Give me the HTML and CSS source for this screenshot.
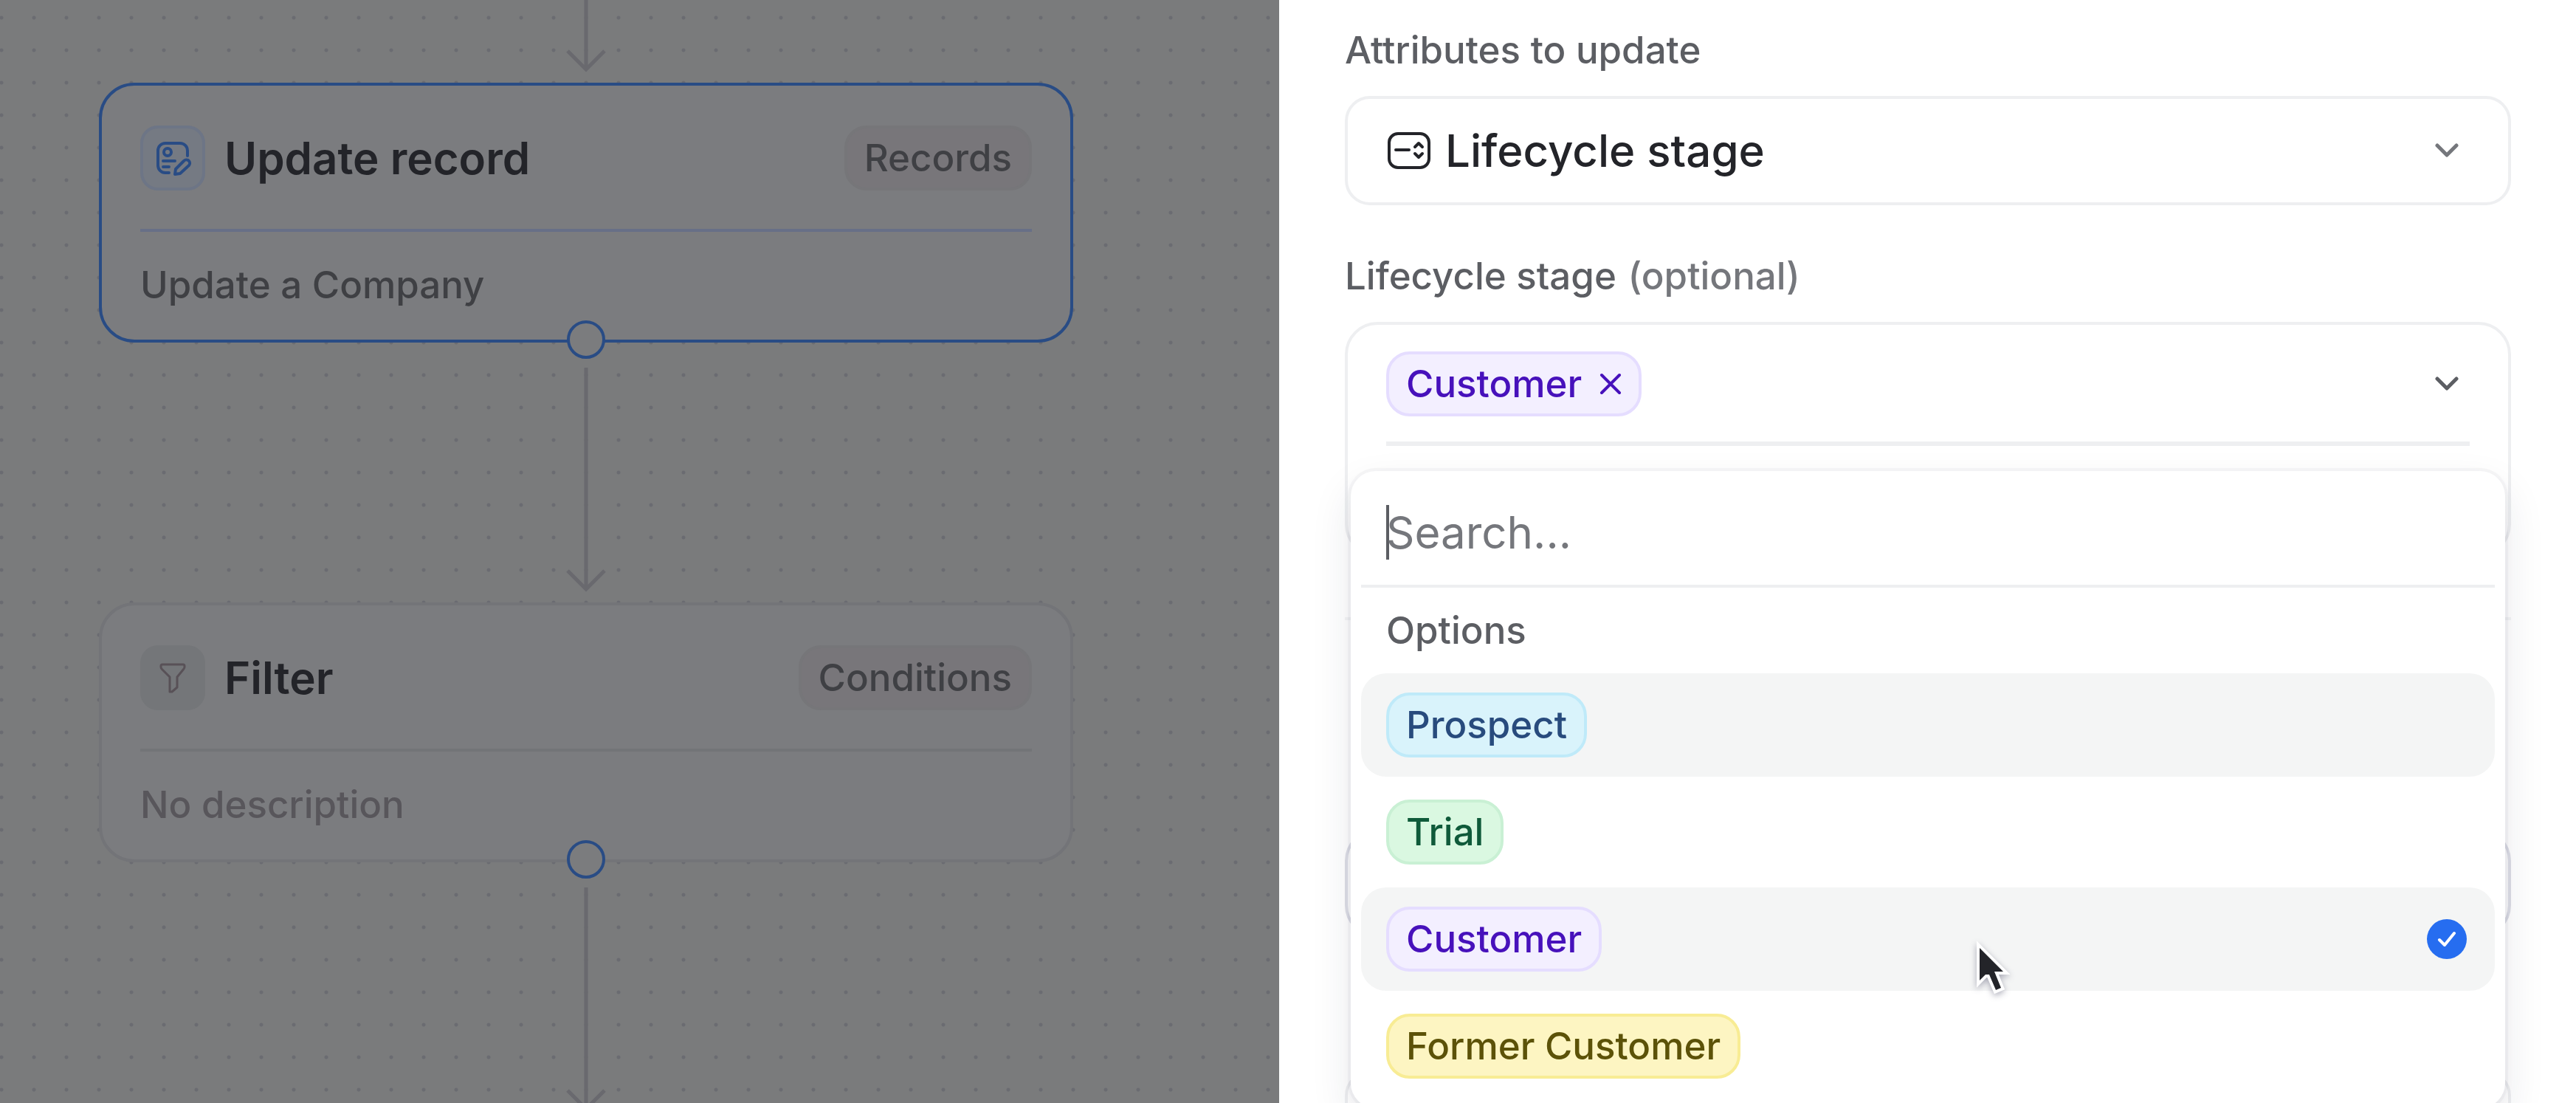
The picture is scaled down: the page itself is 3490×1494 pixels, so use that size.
FILE: index.html
```html
<!DOCTYPE html>
<html lang="en">
<head>
    <meta charset="UTF-8">
    <meta name="viewport" content="width=device-width, initial-scale=1.0">
    <title>Workflow - Update record</title>
    <link rel="stylesheet" href="styles.css">
</head>
<body>
    <div class="editor">
        <!-- Workflow canvas -->
        <main class="canvas">
            <svg class="connector connector-first" viewBox="0 0 60 112">
                <path d="M30 0V94M5 69L30 94L55 69"/>
            </svg>

            <section class="card card-active">
                <div class="card-header">
                    <span class="card-icon">
                        <svg viewBox="0 0 88 88">
                            <path d="M64 41V34a10 10 0 0 0-10-10H34a10 10 0 0 0-10 10V54a10 10 0 0 0 10 10H39"/>
                            <circle cx="37" cy="36" r="5"/>
                            <path d="M31 48H47M31 56H39"/>
                            <path d="M47 66l1-7 11-11a4 4 0 0 1 7 6L54 65z"/>
                        </svg>
                    </span>
                    <h2 class="card-title">Update record</h2>
                    <span class="card-badge">Records</span>
                </div>
                <p class="card-description">Update a Company</p>
                <span class="port"></span>
            </section>

            <svg class="connector" viewBox="0 0 60 352">
                <path d="M30 34V334M5 309L30 334L55 309"/>
            </svg>

            <section class="card">
                <div class="card-header">
                    <span class="card-icon">
                        <svg viewBox="0 0 88 88">
                            <path d="M30 26H58a2 2 0 0 1 2 2V29q0 2-1 3L50 43V57L43 63H40V43L29 32q-1-1-1-3V28a2 2 0 0 1 2-2Z"/>
                        </svg>
                    </span>
                    <h2 class="card-title">Filter</h2>
                    <span class="card-badge">Conditions</span>
                </div>
                <p class="card-description empty">No description</p>
                <span class="port"></span>
            </section>

            <svg class="connector" viewBox="0 0 60 352">
                <path d="M30 34V334M5 309L30 334L55 309"/>
            </svg>
        </main>

        <!-- Settings panel -->
        <aside class="panel">
            <div class="field">
                <label class="field-label" for="attribute">Attributes to update</label>
                <div class="field-box">
                    <svg class="attribute-icon" viewBox="0 0 60 50">
                        <rect x="4" y="2" width="54" height="46" rx="12"/>
                        <path d="M13 24H31M39 20l5-5 5 5M39 29l5 5 5-5"/>
                    </svg>
                    <select class="field-select" id="attribute">
                        <option>Lifecycle stage</option>
                    </select>
                    <svg class="chevron" viewBox="0 0 60 60"><path d="M16 23l13 13 13-13"/></svg>
                </div>
            </div>

            <div class="field">
                <label class="field-label" for="search">Lifecycle stage <span class="optional">(optional)</span></label>
                <div class="multi-box">
                    <div class="multi-value">
                        <span class="tag tag-purple">
                            Customer
                            <button class="tag-remove" type="button" aria-label="Remove Customer">
                                <svg viewBox="0 0 30 30"><path d="M3 3L27 27M27 3L3 27"/></svg>
                            </button>
                        </span>
                        <button class="toggle" type="button" aria-label="Toggle options">
                            <svg class="chevron" viewBox="0 0 60 60"><path d="M16 23l13 13 13-13"/></svg>
                        </button>
                    </div>

                    <!-- Dropdown -->
                    <div class="menu">
                        <div class="menu-search">
                            <span class="caret"></span>
                            <input class="search-input" id="search" type="text" placeholder="Search...">
                        </div>
                        <p class="menu-title">Options</p>
                        <div class="options">
                            <label class="option highlighted">
                                <span class="tag tag-blue">Prospect</span>
                                <input class="option-check" type="checkbox">
                            </label>
                            <label class="option">
                                <span class="tag tag-green">Trial</span>
                                <input class="option-check" type="checkbox">
                            </label>
                            <label class="option highlighted">
                                <span class="tag tag-purple">Customer</span>
                                <input class="option-check" type="checkbox" checked>
                                <svg class="check-mark" viewBox="0 0 54 54"><path d="M17 28l7 7 13-16"/></svg>
                            </label>
                            <label class="option">
                                <span class="tag tag-yellow">Former Customer</span>
                                <input class="option-check" type="checkbox">
                            </label>
                        </div>
                        <svg class="cursor" viewBox="0 0 64 88">
                            <path d="M12 14L44 46H32L41 68L34 71L25 50H20L12 58Z"/>
                        </svg>
                    </div>
                </div>
            </div>

            <div class="next-section">
                <div class="field-box covered"></div>
                <div class="field-box"></div>
            </div>
        </aside>
    </div>
</body>
</html>
```

FILE: styles.css
```css
* {
    box-sizing: border-box;
}

body {
    margin: 0;
    font-family: Inter, sans-serif;
    font-size: 51px;
    font-weight: 500;
    line-height: 64px;
    color: #232429;
    overflow: hidden;
}

h2, p {
    margin: 0;
}

button {
    padding: 0;
    border: none;
    background: none;
    color: inherit;
    cursor: pointer;
}

svg {
    display: block;
    flex-shrink: 0;
    fill: none;
    stroke: currentColor;
    stroke-width: 4;
    stroke-linecap: round;
    stroke-linejoin: round;
}

.editor {
    display: grid;
    grid-template-columns: 1733fr 1757fr;
    height: 100vh;
    overflow: hidden;
}

/* Workflow canvas */
.canvas {
    display: flex;
    flex-direction: column;
    align-items: center;
    padding: 0 279px 0 134px;
    overflow: hidden;
    background-color: #7a7b7c;
    background-image: radial-gradient(circle, #6a6b71 2px, transparent 3px);
    background-size: 44px 44px;
    background-position: -20px 2px;
}

.connector {
    width: 60px;
    height: 352px;
    color: #69696e;
    stroke-width: 5;
    stroke-linecap: butt;
    stroke-linejoin: miter;
}

.connector-first {
    height: 112px;
}

.card {
    position: relative;
    flex-shrink: 0;
    width: 100%;
    padding: 54px 52px 0;
    border: 4px solid #737478;
    border-radius: 48px;
    background: #7b7c7f;
}

.card-header {
    display: flex;
    align-items: center;
    gap: 26px;
    padding-bottom: 52px;
    border-bottom: 4px solid #727477;
}

.card-icon {
    width: 88px;
    height: 88px;
    border-radius: 24px;
    background: #747679;
    color: #585157;
}

.card-icon svg {
    stroke-width: 3;
}

.card-title {
    flex: 1;
    font-size: 60px;
    font-weight: 600;
}

.card-badge {
    height: 88px;
    padding: 8px 23px;
    border: 4px solid #767679;
    border-radius: 30px;
    background: #78767a;
    color: #3f4044;
}

.card-description {
    padding: 40px 0 42px;
    color: #3f4044;
}

.card-description.empty {
    color: #58565b;
}

.card-active {
    border-color: #294c85;
}

.card-active .card-header {
    border-color: #676f87;
}

.card-active .card-icon {
    background: #757a83;
    box-shadow: inset 0 0 0 4px #6d7586;
    color: #294c85;
}

.card-active .card-icon svg {
    stroke-width: 4;
}

.port {
    position: absolute;
    bottom: -26px;
    left: 50%;
    width: 52px;
    height: 52px;
    margin-left: -26px;
    border: 4px solid #294c85;
    border-radius: 50%;
    background: #7b7c7e;
}

/* Settings panel */
.panel {
    padding: 36px 88px 0 89px;
    overflow: hidden;
    background: #fff;
}

.field {
    margin-bottom: 64px;
}

.field-label {
    display: block;
    margin-bottom: 30px;
    color: #5c5e63;
}

.optional {
    margin-left: 2px;
    color: #75777c;
}

.field-box {
    display: flex;
    align-items: center;
    gap: 20px;
    height: 148px;
    padding: 0 52px;
    border: 4px solid #eeeff1;
    border-radius: 34px;
}

.attribute-icon {
    width: 60px;
    height: 50px;
}

.field-select {
    flex: 1;
    height: 100%;
    padding: 0;
    border: none;
    background: none;
    appearance: none;
    font: inherit;
    font-size: 60px;
    line-height: 80px;
    color: #232429;
}

.chevron {
    width: 60px;
    height: 60px;
    stroke-width: 5;
    color: #75777c;
}

.multi-box {
    position: relative;
    height: 318px;
    padding: 36px 52px 0;
    border: 4px solid #eeeff1;
    border-radius: 44px;
}

.multi-value {
    display: flex;
    align-items: center;
    justify-content: space-between;
    padding-bottom: 34px;
    border-bottom: 6px solid #eeeff1;
}

.toggle .chevron {
    color: #5c5e63;
}

/* Tags */
.tag {
    display: flex;
    align-items: center;
    gap: 24px;
    height: 88px;
    padding: 0 23px;
    border: 4px solid;
    border-radius: 32px;
}

.tag-remove svg {
    width: 30px;
    height: 30px;
}

.tag-blue {
    border-color: #bfeaf9;
    background: #d9f3fb;
    color: #284b7d;
}

.tag-green {
    border-color: #c9f0d4;
    background: #daf8e1;
    color: #0f5a3a;
}

.tag-purple {
    border-color: #e5ddff;
    background: #f3efff;
    color: #4711bb;
}

.tag-yellow {
    border-color: #f8ec94;
    background: #fdf5c2;
    color: #5c5208;
}

/* Dropdown */
.menu {
    position: absolute;
    top: 198px;
    left: 4px;
    right: 4px;
    padding: 0 14px 14px;
    border-radius: 34px;
    background: #fff;
    box-shadow: 0 0 0 4px rgba(28, 40, 64, 0.03), 0 24px 56px rgba(28, 40, 64, 0.1), 0 4px 16px rgba(28, 40, 64, 0.03);
}

.menu-search {
    display: flex;
    padding: 46px 34px 34px;
    border-bottom: 4px solid #eeeff1;
}

.caret {
    width: 4px;
    height: 74px;
    margin-right: -4px;
    background: #5c5e63;
}

.search-input {
    flex: 1;
    height: 74px;
    padding: 0;
    border: none;
    outline: none;
    background: none;
    font: inherit;
    font-size: 60px;
    font-weight: 400;
    color: #232429;
}

.search-input::placeholder {
    color: #75777c;
}

.menu-title {
    padding: 26px 34px;
    color: #5c5e63;
}

.options {
    display: flex;
    flex-direction: column;
    gap: 5px;
}

.option {
    position: relative;
    display: flex;
    align-items: center;
    justify-content: space-between;
    height: 140px;
    padding: 0 38px 0 34px;
    border-radius: 34px;
}

.option.highlighted {
    background: #f4f5f5;
}

.option-check {
    width: 54px;
    height: 54px;
    margin: 0;
    border-radius: 50%;
    appearance: none;
}

.option-check:checked {
    background: #266df0;
}

.check-mark {
    position: absolute;
    right: 38px;
    width: 54px;
    height: 54px;
    color: #fff;
}

.cursor {
    position: absolute;
    top: 632px;
    left: 840px;
    width: 64px;
    height: 88px;
    fill: #232429;
    stroke: #fff;
    stroke-width: 8;
    stroke-linejoin: miter;
    paint-order: stroke;
    filter: drop-shadow(0 3px 4px rgba(28, 28, 64, 0.35));
}

/* Section under the open dropdown */
.next-section {
    display: flex;
    flex-direction: column;
    gap: 180px;
    margin-top: 82px;
    padding-top: 282px;
    border-top: 4px solid #f4f5f6;
}

.field-box.covered {
    border-color: #dddee6;
    border-radius: 44px;
}
```
